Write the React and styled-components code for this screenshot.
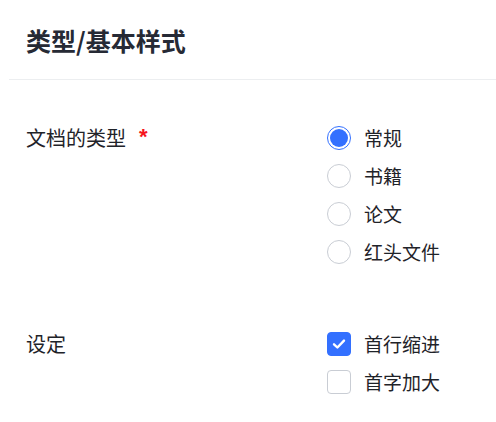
import React, { useState } from "react";
import styled, { createGlobalStyle } from "styled-components";

const Global = createGlobalStyle`
  html, body { margin: 0; padding: 0; background: #fff; }
  body { font-family: "Noto Sans CJK SC", "Noto Sans", sans-serif; color: #1f2329; }
`;

const Page = styled.div`
  width: 496px;
  height: 422px;
  padding-left: 9px;
  box-sizing: border-box;
`;

const Header = styled.div`
  height: 80px;
  box-sizing: border-box;
  border-bottom: 1px solid #eceef0;
  display: flex;
  align-items: center;
  padding: 0 17px;
`;

const Title = styled.h1`
  margin: 0;
  font-size: 25px;
  font-weight: 700;
  line-height: 1;
  color: #262a35;
  position: relative;
  top: 1px;
`;

const Form = styled.div`
  padding: 46px 17px 0;
  display: flex;
  flex-direction: column;
  gap: 68px;
`;

const Row = styled.div`
  display: grid;
  grid-template-columns: 301px 1fr;
  align-items: start;
`;

const Label = styled.div`
  font-size: 20px;
  line-height: 24px;
  display: flex;
  align-items: center;
`;

const Required = styled.span`
  color: #f5141e;
  font-family: "Liberation Sans", sans-serif;
  font-weight: 700;
  font-size: 22px;
  line-height: 24px;
  margin-left: 13px;
  position: relative;
  top: -1px;
`;

const Options = styled.div`
  display: flex;
  flex-direction: column;
  gap: 14px;
`;

const Option = styled.label`
  display: flex;
  align-items: center;
  gap: 13px;
  height: 24px;
  font-size: 19px;
  cursor: pointer;
`;

const RadioMark = styled.span`
  width: 24px;
  height: 24px;
  box-sizing: border-box;
  border-radius: 50%;
  border: 1px solid ${(p) => (p.$checked ? "#3370ff" : "#c9cdd4")};
  display: flex;
  align-items: center;
  justify-content: center;
  flex-shrink: 0;
  &::after {
    content: "";
    width: 18px;
    height: 18px;
    border-radius: 50%;
    background: ${(p) => (p.$checked ? "#3370ff" : "transparent")};
  }
`;

const CheckMark = styled.span`
  width: 24px;
  height: 24px;
  box-sizing: border-box;
  border-radius: 4px;
  border: 1px solid ${(p) => (p.$checked ? "#3370ff" : "#c9cdd4")};
  background: ${(p) => (p.$checked ? "#3370ff" : "#fff")};
  display: flex;
  align-items: center;
  justify-content: center;
  flex-shrink: 0;
`;

const OptionText = styled.span`
  line-height: 24px;
`;

const types = ["常规", "书籍", "论文", "红头文件"];

export default function App() {
  const [type, setType] = useState("常规");
  const [settings, setSettings] = useState({ 首行缩进: true, 首字加大: false });
  return (
    <Page>
      <Global />
      <Header>
        <Title>类型/基本样式</Title>
      </Header>
      <Form>
        <Row>
          <Label>
            文档的类型<Required>*</Required>
          </Label>
          <Options>
            {types.map((t) => (
              <Option key={t} onClick={() => setType(t)}>
                <RadioMark $checked={type === t} />
                <OptionText>{t}</OptionText>
              </Option>
            ))}
          </Options>
        </Row>
        <Row>
          <Label>设定</Label>
          <Options>
            {Object.keys(settings).map((k) => (
              <Option
                key={k}
                onClick={() => setSettings((s) => ({ ...s, [k]: !s[k] }))}
              >
                <CheckMark $checked={settings[k]}>
                  {settings[k] && (
                    <svg width="16" height="16" viewBox="0 0 16 16">
                      <path
                        d="M3 8.3 L6.4 11.5 L13 4.6"
                        fill="none"
                        stroke="#fff"
                        strokeWidth="2.4"
                        strokeLinecap="round"
                        strokeLinejoin="round"
                      />
                    </svg>
                  )}
                </CheckMark>
                <OptionText>{k}</OptionText>
              </Option>
            ))}
          </Options>
        </Row>
      </Form>
    </Page>
  );
}
